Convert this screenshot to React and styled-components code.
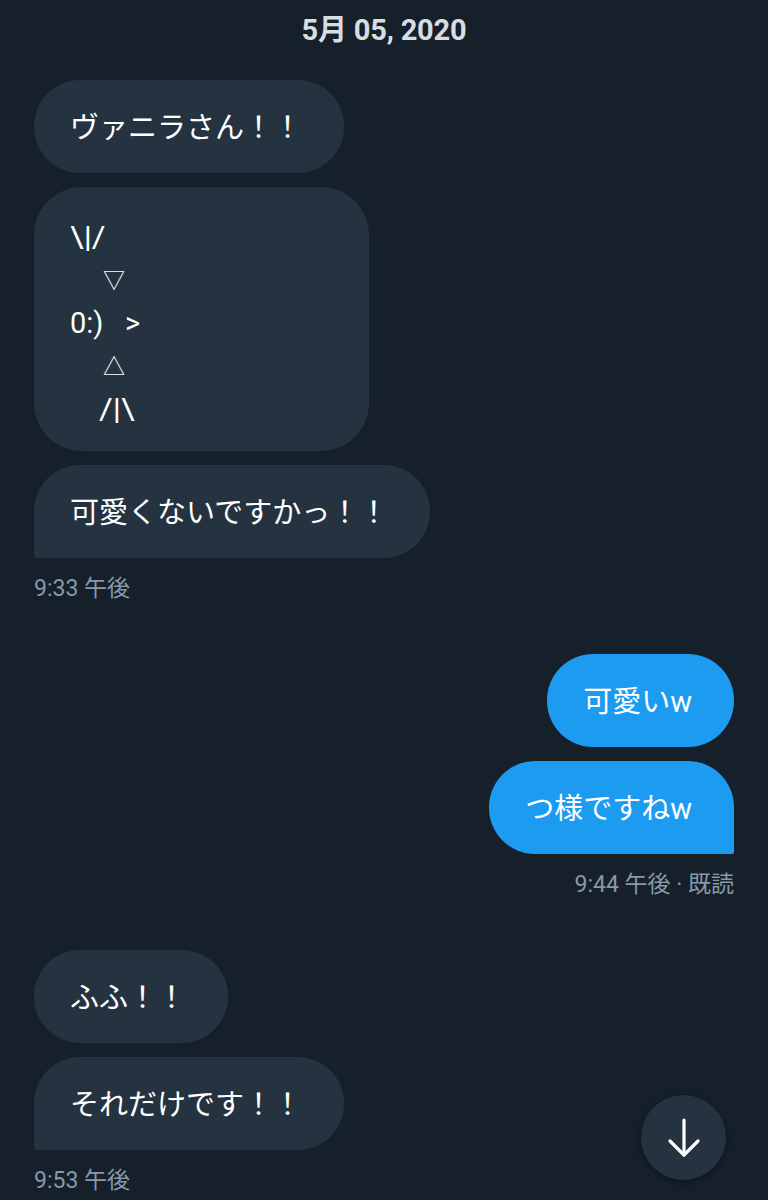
import React from "react";
import styled, { createGlobalStyle } from "styled-components";

const Global = createGlobalStyle`
  html, body { margin: 0; padding: 0; background: #15202b; }
  body { font-family: Roboto, "Noto Sans CJK JP", sans-serif; }
`;

const Page = styled.div`
  position: relative;
  width: 768px;
  height: 1200px;
  overflow: hidden;
  background: #15202b;
  padding: 0 34px;
  box-sizing: border-box;
  display: flex;
  flex-direction: column;
`;

const DateHeader = styled.div`
  text-align: center;
  font-family: Roboto, "Noto Sans CJK JP", sans-serif;
  font-weight: 700;
  font-size: 29px;
  line-height: 36px;
  color: #d9dde1;
  padding-top: 12px;
  margin-bottom: 32px;
  letter-spacing: -0.2px;
`;

const Group = styled.div`
  display: flex;
  flex-direction: column;
  align-items: ${(p) => (p.$mine ? "flex-end" : "flex-start")};
  gap: 14px;
`;

const Bubble = styled.div`
  box-sizing: border-box;
  background: ${(p) => (p.$mine ? "#1d9bf0" : "#253341")};
  color: #ffffff;
  font-family: Roboto, "Noto Sans CJK JP", sans-serif;
  font-size: 29px;
  line-height: 39px;
  height: 93px;
  padding: 29px 42px 25px 36px;
  border-radius: 46px;
  ${(p) => p.$last && !p.$mine && "border-bottom-left-radius: 2px;"}
  ${(p) => p.$last && p.$mine && "border-bottom-right-radius: 2px;"}
  white-space: nowrap;
`;

const ArtBubble = styled.div`
  box-sizing: border-box;
  background: #253341;
  color: #ffffff;
  font-family: Roboto, "Noto Sans CJK JP", sans-serif;
  font-size: 29px;
  width: 335px;
  height: 264px;
  padding: 29px 0 20px 36px;
  border-radius: 48px;
  display: flex;
  flex-direction: column;
`;

const ArtLine = styled.div`
  height: 43px;
  line-height: 43px;
  padding-left: ${(p) => p.$indent || 0}px;
  font-size: ${(p) => p.$size || 29}px;
  white-space: pre;
`;

const Wide = styled.span`
  display: inline-block;
  transform: scaleX(1.15);
  transform-origin: left center;
`;

const Time = styled.div`
  margin-top: 4px;
  font-family: Roboto, "Noto Sans CJK JP", sans-serif;
  font-size: 23px;
  line-height: 26px;
  color: #8899a6;
  align-self: ${(p) => (p.$mine ? "flex-end" : "flex-start")};
`;

const Spacer = styled.div`
  height: 52px;
  flex: none;
`;

const ScrollButton = styled.button`
  position: absolute;
  left: 641px;
  top: 1095px;
  width: 85px;
  height: 85px;
  border-radius: 50%;
  border: none;
  background: #253341;
  display: flex;
  align-items: center;
  justify-content: center;
  padding: 0;
  box-shadow: 0 2px 6px rgba(0, 0, 0, 0.35);
`;

export default function App() {
  return (
    <Page>
      <Global />
      <DateHeader>5月 05, 2020</DateHeader>
      <Group>
        <Bubble>ヴァニラさん！！</Bubble>
        <ArtBubble>
          <ArtLine><Wide>{"\\|/"}</Wide></ArtLine>
          <ArtLine $indent={33} $size={22}>▽</ArtLine>
          <ArtLine>{"0:)   >"}</ArtLine>
          <ArtLine $indent={33} $size={22}>△</ArtLine>
          <ArtLine $indent={29}><Wide>{"/|\\"}</Wide></ArtLine>
        </ArtBubble>
        <Bubble $last>可愛くないですかっ！！</Bubble>
        <Time>9:33 午後</Time>
      </Group>
      <Spacer />
      <Group $mine>
        <Bubble $mine>可愛いw</Bubble>
        <Bubble $mine $last>つ様ですねw</Bubble>
        <Time $mine>9:44 午後 · 既読</Time>
      </Group>
      <Spacer />
      <Group>
        <Bubble>ふふ！！</Bubble>
        <Bubble $last>それだけです！！</Bubble>
        <Time>9:53 午後</Time>
      </Group>
      <ScrollButton aria-label="scroll down">
        <svg width="36" height="42" viewBox="0 0 36 42" fill="none" stroke="#ffffff" strokeWidth="3.2" strokeLinecap="round" strokeLinejoin="round">
          <path d="M18 3 V38" />
          <path d="M4 24 L18 38 L32 24" />
        </svg>
      </ScrollButton>
    </Page>
  );
}
